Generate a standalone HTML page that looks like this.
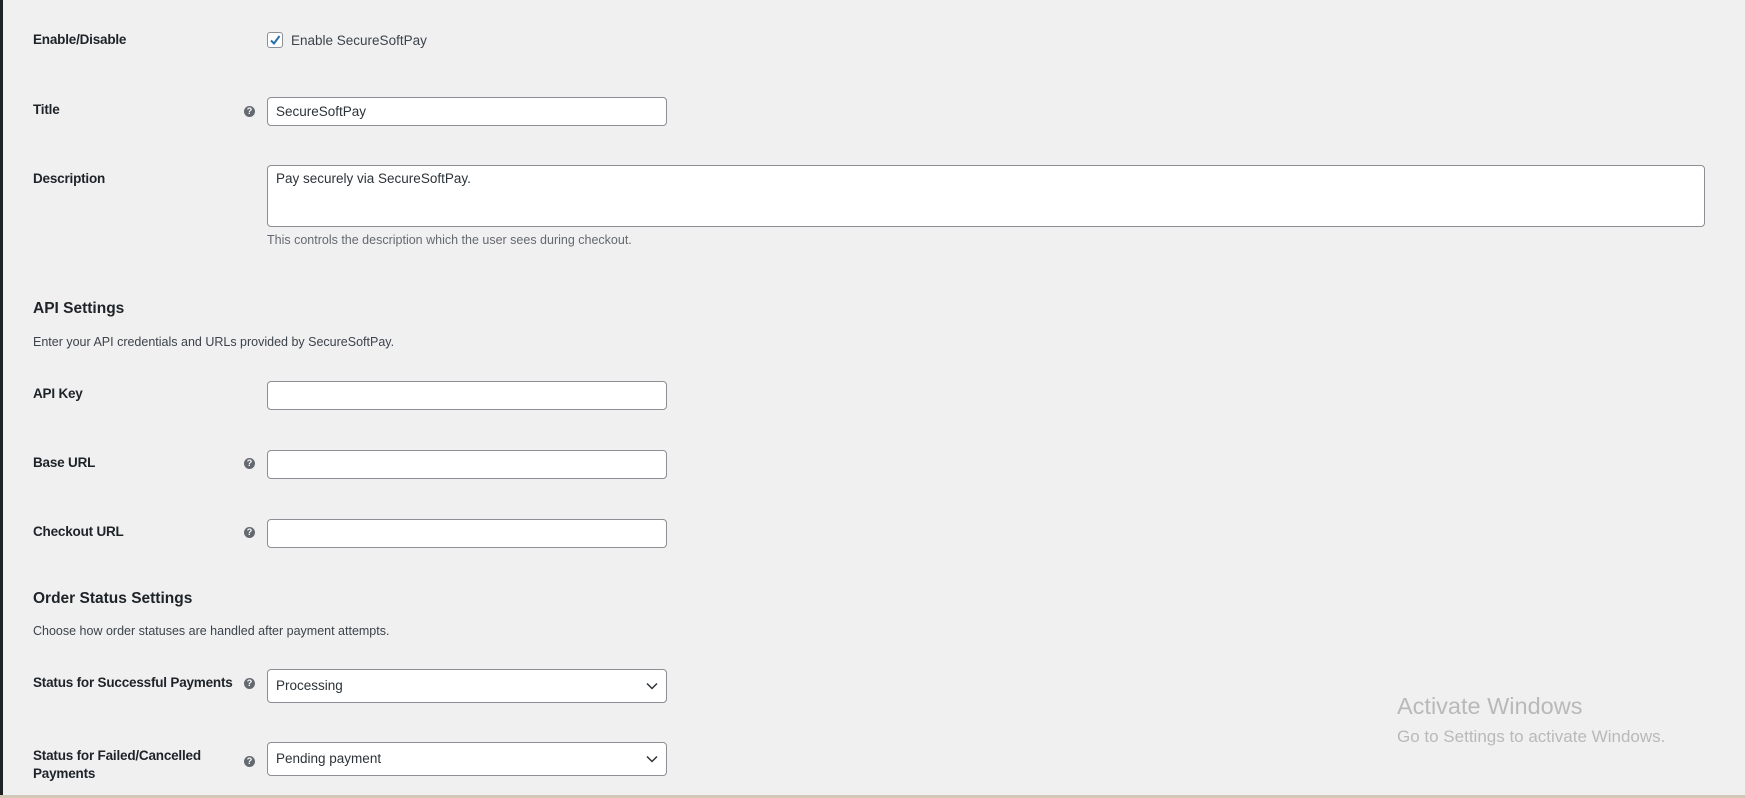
<!DOCTYPE html>
<html><head><meta charset="utf-8"><style>
body{margin:0;width:1745px;height:798px;background:#f0f0f1;font-family:"Liberation Sans",sans-serif;color:#1d2327;position:relative;overflow:hidden}
.bar{position:absolute;left:0;top:0;width:3px;height:798px;background:#1d2327}
.a{position:absolute;white-space:nowrap}
.lbl{font-size:13.5px;font-weight:bold;line-height:18px;letter-spacing:-0.2px}
.inp{position:absolute;left:267px;width:400px;background:#fff;border:1px solid #8c8f94;border-radius:4px;box-sizing:border-box;font-size:13.5px;padding-left:8px;color:#2c3338}
.help{position:absolute;left:244px;width:11px;height:11px;border-radius:50%;background:#646970;color:#fff;font-size:9px;font-weight:bold;text-align:center;line-height:11px}
.h2{font-size:15.5px;font-weight:bold}
.d{font-size:12.5px;color:#3c434a}
.chev{position:absolute;right:8px;top:50%;margin-top:-5px}
</style></head><body>
<div class="bar"></div>
<div class="a lbl" style="left:33px;top:31px">Enable/Disable</div>
<div class="a" style="left:267px;top:32px;width:16px;height:16px;border:1px solid #8c8f94;border-radius:3px;background:#fff;box-sizing:border-box"><svg width="14" height="14" viewBox="0 0 14 14" style="position:absolute;left:0;top:0"><path d="M3 7.5L6 10.5L11.5 3" stroke="#2271b1" stroke-width="2" fill="none"/></svg></div>
<div class="a" style="left:291px;top:33px;font-size:13.5px;color:#3c434a">Enable SecureSoftPay</div>

<div class="a lbl" style="left:33px;top:101px">Title</div>
<div class="help" style="top:106px">?</div>
<div class="inp" style="top:97px;height:29px;line-height:27px">SecureSoftPay</div>

<div class="a lbl" style="left:33px;top:170px">Description</div>
<div class="inp" style="top:165px;height:62px;width:1438px;padding-top:4px;line-height:18px">Pay securely via SecureSoftPay.</div>
<div class="a d" style="left:267px;top:233px;color:#646970">This controls the description which the user sees during checkout.</div>

<div class="a h2" style="left:33px;top:300px">API Settings</div>
<div class="a d" style="left:33px;top:335px">Enter your API credentials and URLs provided by SecureSoftPay.</div>

<div class="a lbl" style="left:33px;top:385px">API Key</div>
<div class="inp" style="top:381px;height:29px"></div>

<div class="a lbl" style="left:33px;top:454px">Base URL</div>
<div class="help" style="top:458px">?</div>
<div class="inp" style="top:450px;height:29px"></div>

<div class="a lbl" style="left:33px;top:523px">Checkout URL</div>
<div class="help" style="top:527px">?</div>
<div class="inp" style="top:519px;height:29px"></div>

<div class="a h2" style="left:33px;top:590px">Order Status Settings</div>
<div class="a d" style="left:33px;top:624px">Choose how order statuses are handled after payment attempts.</div>

<div class="a lbl" style="left:33px;top:674px">Status for Successful Payments</div>
<div class="help" style="top:678px">?</div>
<div class="inp" style="top:669px;height:34px;line-height:32px">Processing<svg class="chev" width="12" height="10" viewBox="0 0 12 10"><path d="M1 2.5L6 7.5L11 2.5" stroke="#2c3338" stroke-width="1.5" fill="none"/></svg></div>

<div class="a lbl" style="left:33px;top:747px;line-height:18px">Status for Failed/Cancelled<br>Payments</div>
<div class="help" style="top:756px">?</div>
<div class="inp" style="top:742px;height:34px;line-height:32px">Pending payment<svg class="chev" width="12" height="10" viewBox="0 0 12 10"><path d="M1 2.5L6 7.5L11 2.5" stroke="#2c3338" stroke-width="1.5" fill="none"/></svg></div>

<div class="a" style="left:1397px;top:693px;font-size:23.5px;color:#b9b9b9">Activate Windows</div>
<div class="a" style="left:1397px;top:727px;font-size:17px;color:#b9b9b9">Go to Settings to activate Windows.</div>
<div class="a" style="left:0;top:795px;width:1745px;height:3px;background:#d3c8b8"></div>
</body></html>
